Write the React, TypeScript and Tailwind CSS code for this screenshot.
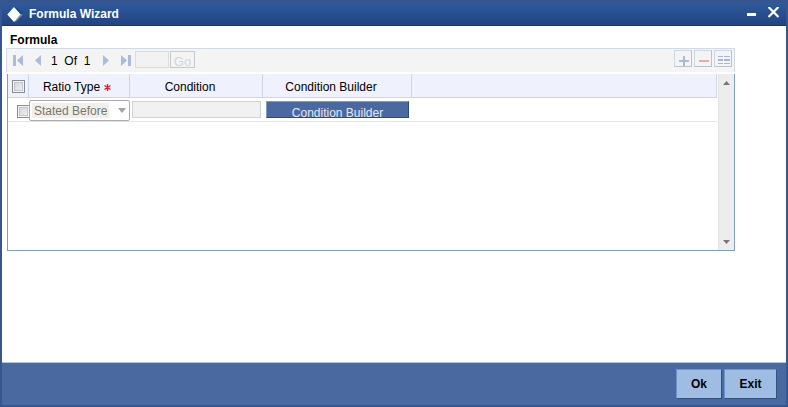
import React from 'react';

const navIcons = {
  first: 'M0 0h3v11H0zM10 0v11L4 5.5z',
  prev: 'M6 0v11L0 5.5z',
  next: 'M0 0v11l6-5.5z',
  last: 'M0 0v11l6-5.5zM7 0h3v11H7z'
};

function NavButton({ icon, label }: { icon: keyof typeof navIcons; label: string }) {
  const width = icon === 'first' || icon === 'last' ? 10 : 6;
  return <button type="button" aria-label={label} className="text-[#a9bcdb]">
      <svg width={width} height="11" viewBox={`0 0 ${width} 11`} fill="currentColor" className="block">
        <path d={navIcons[icon]} />
      </svg>
    </button>;
}

function ToolButton({ label, children }: { label: string; children: React.ReactNode }) {
  return <button type="button" aria-label={label} className="h-[17px] w-[18px] border border-[#bcc2cc] border-t-[#cdd6e2] border-l-[#cdd6e2] bg-[#f4f4f4]">
      <svg width="16" height="15" viewBox="0 0 16 15" className="block">
        {children}
      </svg>
    </button>;
}

function CheckBox({ label }: { label: string }) {
  return <input type="checkbox" aria-label={label} className="block h-[13px] w-[13px] shrink-0 appearance-none border border-[#8b8e91] bg-linear-to-br from-[#cbcfd5] to-[#f6f6f6] shadow-[inset_0_0_0_1px_#f4f4f4,inset_0_0_0_2px_#c3c7cc]" />;
}

function TitleBar() {
  return <header className="flex h-[23px] items-center border-b border-[#1a3672] bg-linear-to-b from-[#2e5a9c] to-[#224482] pr-[7px] pl-[5px] text-white">
      <svg width="18" height="17" viewBox="0 0 18 17" className="mr-1 block">
        <path d="M7 1h2l7.500 7.500L8.500 16z" fill="#0e4b7d" />
        <path d="M8.500 16l7.500-7.500-2.500-.5-6 7z" fill="#6f94bd" />
        <path d="M7 1l6.500 7.300L7 16 .3 8.500z" fill="#fff" />
      </svg>
      <h1 className="grow font-bold">Formula Wizard</h1>
      <button type="button" aria-label="Minimize" className="mr-3">
        <svg width="9" height="13" viewBox="0 0 9 13" className="block"><path d="M0 5h9v3H0z" fill="#fff" /></svg>
      </button>
      <button type="button" aria-label="Close" className="pb-1">
        <svg width="11" height="11" viewBox="0 0 11 11" className="block">
          <path d="M.5 0L10.500 10M10.500 0L.5 10" stroke="#fff" strokeWidth="2.200" />
        </svg>
      </button>
    </header>;
}

function Toolbar() {
  return <div className="-ml-px flex h-6 items-center border border-b-0 border-[#d0dae6] bg-[#f4f4f4] pr-[2px] pl-[6px]">
      <div className="flex items-center">
        <NavButton icon="first" label="First" />
        <div className="w-3" />
        <NavButton icon="prev" label="Previous" />
        <span className="w-[62px] pl-[10px] whitespace-pre">1  Of  1</span>
        <NavButton icon="next" label="Next" />
        <div className="w-3" />
        <NavButton icon="last" label="Last" />
      </div>
      <div className="ml-1 flex gap-px self-start pt-[2px]">
        <input disabled aria-label="Page" className="h-[17px] w-[34px] border border-[#dcdcdc] bg-[#f2f2f2]" />
        <button type="button" disabled className="h-[17px] w-[25px] overflow-hidden border border-[#c4cad2] bg-[#f4f4f4] pt-[2px] text-[13px] leading-[15px] text-[#d3d6da]">Go</button>
      </div>
      <div className="ml-auto flex gap-[2px] self-start pt-px">
        <ToolButton label="Add row"><path d="M8 5h2v4h4v2h-4v4H8v-4H4V9h4z" fill="#a9b9d8" /></ToolButton>
        <ToolButton label="Delete row"><path d="M4 9h10v2H4z" fill="#e9a9a9" /></ToolButton>
        <ToolButton label="Single record view"><path d="M3 5h5v1H3zM9 5h6v1H9zM3 8h5v2H3zM9 8h6v2H9zM3 12h5v1H3zM9 12h6v1H9z" fill="#a4b6d8" /></ToolButton>
      </div>
    </div>;
}

function FormulaTable() {
  return <table className="w-full table-fixed border-separate border-spacing-0">
      <colgroup>
        <col className="w-[21px]" />
        <col className="w-[101px]" />
        <col className="w-[133px]" />
        <col className="w-[149px]" />
        <col />
      </colgroup>
      <thead>
        <tr className="h-6 bg-[#eff2fc]">
          <th className="border-r border-b border-[#cdd6e6] p-0 pt-px pl-1"><CheckBox label="Select all" /></th>
          <th className="border-r border-b border-[#cdd6e6] p-0 pt-[2px] pr-1 font-normal whitespace-nowrap">
            Ratio Type
            <svg width="7" height="7" viewBox="0 0 7 7" aria-label="required" className="ml-1 inline align-baseline">
              <path d="M3.500 0v7M.5 1.500l6 4M6.500 1.500l-6 4" stroke="#dc1c28" strokeWidth="1.300" />
            </svg>
          </th>
          <th className="border-r border-b border-[#cdd6e6] p-0 pt-[2px] pr-3 font-normal">Condition</th>
          <th className="border-r border-b border-[#cdd6e6] p-0 pt-[2px] pr-3 font-normal">Condition Builder</th>
          <th className="border-r border-b border-[#cdd6e6] p-0" />
        </tr>
      </thead>
      <tbody>
        <tr className="h-6 align-top">
          <td className="border-b border-[#dfe5ee] p-0 pt-[7px] pl-[9px]"><div className="flex w-3"><CheckBox label="Select row 1" /></div></td>
          <td className="border-b border-[#dfe5ee] p-0 pt-[2px]">
            <div className="relative h-[21px] w-[101px]">
              <select disabled aria-label="Ratio Type" className="block h-full w-full appearance-none rounded-[2px] border border-[#a9abad] bg-white bg-linear-to-r from-[#f1efe9] to-[#f1efe9] bg-size-[77px_15px] bg-position-[2px_2px] bg-no-repeat pl-1 text-[#77756f] opacity-100">
                <option>Stated Before</option>
              </select>
              <svg width="8" height="5" viewBox="0 0 8 5" className="pointer-events-none absolute top-2 right-1"><path d="M0 0h8L4 5z" fill="#a3a3a3" /></svg>
            </div>
          </td>
          <td className="border-b border-[#dfe5ee] p-0 pt-[3px] pl-[2px]"><input disabled aria-label="Condition" className="block h-[17px] w-[129px] border border-[#d2d2d2] bg-[#f1f1f1]" /></td>
          <td className="border-b border-[#dfe5ee] p-0 pt-[3px] pl-[3px]">
            <button type="button" className="block h-[17px] w-[143px] overflow-hidden border border-[#2c4a77] border-t-[#7f9cc8] border-l-[#7f9cc8] bg-[#4a69a1] pt-1 leading-[14px] text-[#e4e9f2]">Condition Builder</button>
          </td>
          <td className="border-b border-[#dfe5ee] p-0" />
        </tr>
      </tbody>
    </table>;
}

function ScrollBar() {
  return <div className="flex w-4 shrink-0 flex-col items-center justify-between border-l border-[#e2e2e2] bg-[#ededed] pt-[7px] pb-[6px]">
      <svg width="7" height="4" viewBox="0 0 7 4"><path d="M3.500 0L7 4H0z" fill="#777" /></svg>
      <svg width="7" height="4" viewBox="0 0 7 4"><path d="M0 0h7L3.500 4z" fill="#777" /></svg>
    </div>;
}

export default function App() {
  return <div className="flex min-h-screen flex-col border-2 border-t-[3px] border-[#35568f] bg-white font-['Liberation_Sans',Arial,sans-serif] text-xs text-black">
      <TitleBar />
      <main className="grow pt-[6px] pr-[51px] pl-[5px]">
        <h2 className="pl-[3px] font-bold">Formula</h2>
        <Toolbar />
        <section className="mt-[2px] flex min-h-[177px] border border-t-0 border-[#7d9fc6]">
          <div className="min-w-0 grow pr-px"><FormulaTable /></div>
          <ScrollBar />
        </section>
      </main>
      <footer className="flex justify-end gap-[2px] border-t border-[#b5c6df] bg-[#4a69a1] px-[9px] pt-[6px] pb-[6px]">
        <button type="button" className="h-[30px] w-[46px] border border-[#35527f] border-t-[#6f94c8] border-l-[#6f94c8] bg-[#9fbce3] font-bold">Ok</button>
        <button type="button" className="h-[30px] w-[53px] border border-[#35527f] border-t-[#6f94c8] border-l-[#6f94c8] bg-[#9fbce3] font-bold">Exit</button>
      </footer>
    </div>;
}
